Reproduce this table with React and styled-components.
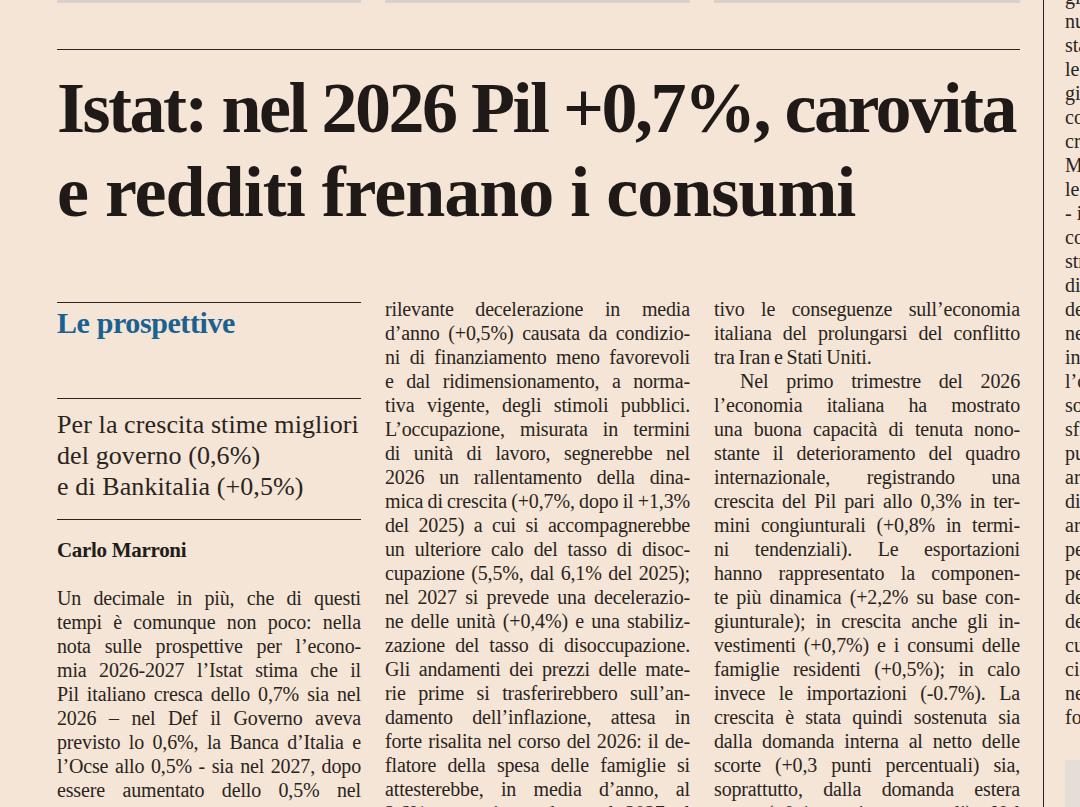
import React from 'react'
import styled, { createGlobalStyle } from 'styled-components'

const GlobalStyle = createGlobalStyle`
  html, body {
    margin: 0;
    padding: 0;
    width: 1080px;
    height: 807px;
    overflow: hidden;
    background: #f4e5d6;
  }
  body {
    font-family: "Liberation Serif", "Times New Roman", serif;
    color: #26211d;
  }
`

const INK = '#2a2420'

const Page = styled.div`
  display: flex;
  box-sizing: border-box;
  width: 1080px;
  height: 807px;
  padding-left: 57px;
  overflow: hidden;
`

const Main = styled.main`
  width: 963px;
  flex-shrink: 0;
`

const ThreeCols = styled.div`
  display: grid;
  grid-template-columns: 304px 305px 306px;
  column-gap: 24px;
`

const TeaserBars = styled(ThreeCols)`
  height: 3px;
`

const TeaserBar = styled.div`
  background: #d9d2cc;
`

const Rule = styled.div`
  border-top: 1px solid ${INK};
  margin-top: ${p => p.$top || 0}px;
`

const Headline = styled.h1`
  margin: 16px 0 0;
  font-size: 72px;
  line-height: 84px;
  font-weight: 700;
  color: #1f1a17;
`

const HeadLine = styled.span`
  display: block;
  white-space: nowrap;
  letter-spacing: ${p => p.$tracking}px;
`

const Columns = styled(ThreeCols)`
  margin-top: 63px;
`

const Side = styled.div`
  padding-top: 5px;
`

const Kicker = styled.h2`
  margin: 3px 0 58px;
  font-size: 30px;
  line-height: 34px;
  font-weight: 700;
  letter-spacing: -0.4px;
  color: #1b6190;
`

const Summary = styled.p`
  margin: 10px 0 17px;
  font-size: 26px;
  line-height: 31px;
  letter-spacing: 0.1px;
  color: #2a2420;
`

const Author = styled.div`
  margin: 18px 0 24px;
  font-size: 21px;
  line-height: 24px;
  font-weight: 700;
  letter-spacing: -0.3px;
  color: #221d1a;
`

const Body = styled.div`
  font-size: 20px;
  line-height: 24px;
  letter-spacing: -0.15px;
  word-spacing: -1px;
  color: #2a2420;
`

const Line = styled.span`
  display: block;
  text-align: justify;
  text-align-last: ${p => (p.$last ? 'left' : 'justify')};
  text-indent: ${p => (p.$indent ? '26px' : '0')};
`

const Divider = styled.div`
  flex-shrink: 0;
  width: 0;
  margin-left: 23px;
  border-left: 1px solid ${INK};
`

const Aside = styled.aside`
  flex-shrink: 0;
  width: 304px;
  margin: -15px 0 0 21px;
  font-size: 20px;
  line-height: 24px;
  color: #2a2420;
`

const AsideLine = styled.span`
  display: block;
  white-space: nowrap;
`

const PhotoBox = styled.div`
  margin-top: 31px;
  height: 80px;
  background: #e5ded8;
`

const col1 = [
  'Un decimale in più, che di questi',
  'tempi è comunque non poco: nella',
  'nota sulle prospettive per l’econo-',
  'mia 2026-2027 l’Istat stima che il',
  'Pil italiano cresca dello 0,7% sia nel',
  '2026 – nel Def il Governo aveva',
  'previsto lo 0,6%, la Banca d’Italia e',
  'l’Ocse allo 0,5% - sia nel 2027, dopo',
  'essere aumentato dello 0,5% nel',
  '2025, in linea con le stime di pri-',
]

const col2 = [
  'rilevante decelerazione in media',
  'd’anno (+0,5%) causata da condizio-',
  'ni di finanziamento meno favorevoli',
  'e dal ridimensionamento, a norma-',
  'tiva vigente, degli stimoli pubblici.',
  'L’occupazione, misurata in termini',
  'di unità di lavoro, segnerebbe nel',
  '2026 un rallentamento della dina-',
  'mica di crescita (+0,7%, dopo il +1,3%',
  'del 2025) a cui si accompagnerebbe',
  'un ulteriore calo del tasso di disoc-',
  'cupazione (5,5%, dal 6,1% del 2025);',
  'nel 2027 si prevede una decelerazio-',
  'ne delle unità (+0,4%) e una stabiliz-',
  'zazione del tasso di disoccupazione.',
  'Gli andamenti dei prezzi delle mate-',
  'rie prime si trasferirebbero sull’an-',
  'damento dell’inflazione, attesa in',
  'forte risalita nel corso del 2026: il de-',
  'flatore della spesa delle famiglie si',
  'attesterebbe, in media d’anno, al',
  '2,6% per poi scendere nel 2027 al',
]

const col3 = [
  { t: 'tivo le conseguenze sull’economia' },
  { t: 'italiana del prolungarsi del conflitto' },
  { t: 'tra Iran e Stati Uniti.', last: true },
  { t: 'Nel primo trimestre del 2026', indent: true },
  { t: 'l’economia italiana ha mostrato' },
  { t: 'una buona capacità di tenuta nono-' },
  { t: 'stante il deterioramento del quadro' },
  { t: 'internazionale, registrando una' },
  { t: 'crescita del Pil pari allo 0,3% in ter-' },
  { t: 'mini congiunturali (+0,8% in termi-' },
  { t: 'ni tendenziali). Le esportazioni' },
  { t: 'hanno rappresentato la componen-' },
  { t: 'te più dinamica (+2,2% su base con-' },
  { t: 'giunturale); in crescita anche gli in-' },
  { t: 'vestimenti (+0,7%) e i consumi delle' },
  { t: 'famiglie residenti (+0,5%); in calo' },
  { t: 'invece le importazioni (-0.7%). La' },
  { t: 'crescita è stata quindi sostenuta sia' },
  { t: 'dalla domanda interna al netto delle' },
  { t: 'scorte (+0,3 punti percentuali) sia,' },
  { t: 'soprattutto, dalla domanda estera' },
  { t: 'netta (+0,4 punti percentuali). Nel' },
]

const aside = [
  'gio dell’anno precedente, con un',
  'nuovo aumento dell’inflazione che',
  'stando alle previsioni dell’Istituto',
  'le famiglie dovranno fronteggiare',
  'già a partire dai prossimi mesi. I',
  'consumi restano quindi deboli e la',
  'crescita dipende ancora dall’export.',
  'Ma il quadro internazionale resta',
  'legato all’evoluzione delle tensioni',
  '- in particolare in Medio Oriente -',
  'con effetti sui prezzi dell’energia e',
  'strategiche delle imprese italiane.',
  'dinamica dei consumi privati sarà',
  'debole, con una crescita dello 0,6%',
  'nel 2026 e dello 0,7% nel 2027, in',
  'insieme a una ripresa lenta del',
  'l’occupazione e dei salari reali. Il',
  'sostegno del Pnrr resterebbe però',
  'sfide principali riguardano il debito',
  'pubblico e il costo degli interessi,',
  'arrivati a livelli elevati nel 2025,',
  'di bilancio europei. Per il 2027 è',
  'arrivano segnali di miglioramento',
  'per il potere d’acquisto delle',
  'persone, per effetto dei prezzi',
  'dell’energia in discesa e di un',
  'deciso rafforzamento del lavoro, a',
  'cui si aggiungono rischi al ribasso',
  'ciclici legati al commercio globale e',
  'nelle politiche tariffarie annunciate',
  'fortemente incerte nei prossimi mesi.',
]

export default function App() {
  return (
    <>
      <GlobalStyle />
      <Page>
        <Main>
          <TeaserBars>
            <TeaserBar />
            <TeaserBar />
            <TeaserBar />
          </TeaserBars>
          <Rule $top={46} />

          <Headline>
            <HeadLine $tracking={-2.5}>Istat: nel 2026 Pil +0,7%, carovita</HeadLine>
            <HeadLine $tracking={-1}>e redditi frenano i consumi</HeadLine>
          </Headline>

          <Columns>
            <Side>
              <Rule />
              <Kicker>Le prospettive</Kicker>
              <Rule />
              <Summary>
                Per la crescita stime migliori<br />
                del governo (0,6%)<br />
                e di Bankitalia (+0,5%)
              </Summary>
              <Rule />
              <Author>Carlo Marroni</Author>
              <Body>
                {col1.map((t, i) => (
                  <Line key={i}>{t}</Line>
                ))}
              </Body>
            </Side>

            <Body>
              {col2.map((t, i) => (
                <Line key={i}>{t}</Line>
              ))}
            </Body>

            <Body>
              {col3.map((l, i) => (
                <Line key={i} $last={l.last} $indent={l.indent}>{l.t}</Line>
              ))}
            </Body>
          </Columns>
        </Main>

        <Divider />

        <Aside>
          {aside.map((t, i) => (
            <AsideLine key={i}>{t}</AsideLine>
          ))}
          <PhotoBox />
        </Aside>
      </Page>
    </>
  )
}
